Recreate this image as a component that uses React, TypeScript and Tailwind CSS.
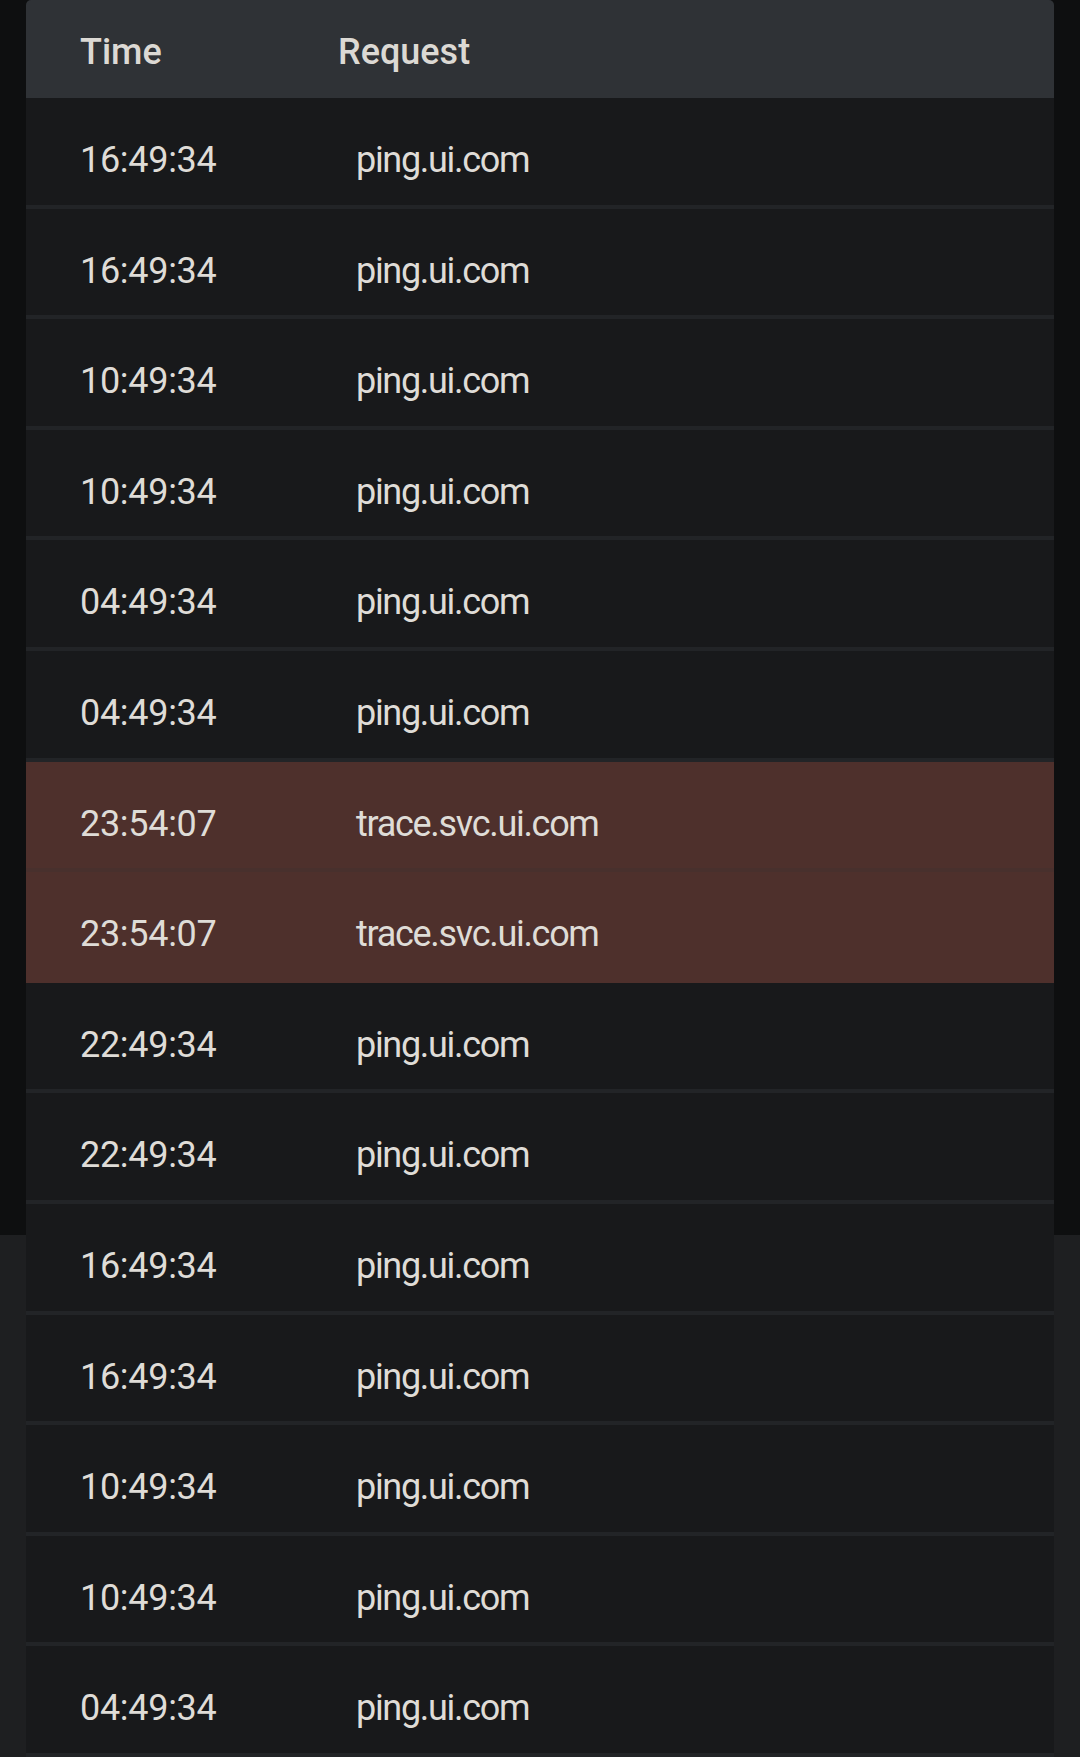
import React from 'react';

type Row = { time: string; host: string; flagged?: boolean };

const ROWS: Row[] = [
  { time: '16:49:34', host: 'ping.ui.com' },
  { time: '16:49:34', host: 'ping.ui.com' },
  { time: '10:49:34', host: 'ping.ui.com' },
  { time: '10:49:34', host: 'ping.ui.com' },
  { time: '04:49:34', host: 'ping.ui.com' },
  { time: '04:49:34', host: 'ping.ui.com' },
  { time: '23:54:07', host: 'trace.svc.ui.com', flagged: true },
  { time: '23:54:07', host: 'trace.svc.ui.com', flagged: true },
  { time: '22:49:34', host: 'ping.ui.com' },
  { time: '22:49:34', host: 'ping.ui.com' },
  { time: '16:49:34', host: 'ping.ui.com' },
  { time: '16:49:34', host: 'ping.ui.com' },
  { time: '10:49:34', host: 'ping.ui.com' },
  { time: '10:49:34', host: 'ping.ui.com' },
  { time: '04:49:34', host: 'ping.ui.com' },
  { time: '04:49:34', host: 'ping.ui.com' },
];

export default function App() {
  return (
    <div
      className="min-h-screen bg-[#1e1f21] text-[#dfdcd7]"
      style={{ fontFamily: 'Roboto, "Noto Sans", sans-serif' }}
    >
      <div className="h-[1235px] bg-[#0e0f10] px-[26px]">
        <div className="w-full">
          {/* header */}
          <div className="flex h-[98px] rounded-t-[5px] bg-[#2f3236] pt-[31px] text-[36px] leading-[42px] font-medium text-[#dcd9d4]">
            <div className="w-[312px] pl-[54px]">Time</div>
            <div>Request</div>
          </div>

          {ROWS.map((row, i) => {
            const next = ROWS[i + 1];
            const border = row.flagged
              ? next?.flagged
                ? 'border-[#48302d]'
                : 'border-[#4e302c]'
              : 'border-[#222427]';
            return (
              <div
                key={i}
                className={`flex h-[110.6px] border-b-4 pt-[41px] text-[36px] leading-[42px] ${border} ${
                  row.flagged ? 'bg-[#4e302c]' : 'bg-[#18191b]'
                }`}
              >
                <div className="w-[330px] pl-[54px] tracking-[-0.3px]">{row.time}</div>
                <div className="tracking-[-1.3px]">{row.host}</div>
              </div>
            );
          })}
        </div>
      </div>
    </div>
  );
}
